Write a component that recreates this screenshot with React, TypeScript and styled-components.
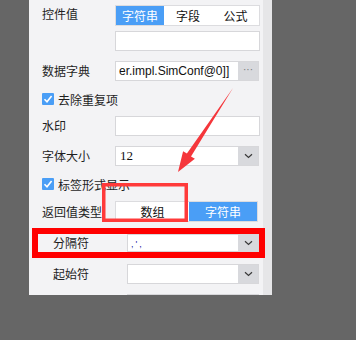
import React from "react";
import styled, { createGlobalStyle } from "styled-components";

const Global = createGlobalStyle`
  html, body { margin: 0; padding: 0; background: #666666; }
  body { font-family: "Noto Sans CJK SC", "Noto Sans", sans-serif; }
`;

const Page = styled.div`
  position: relative;
  width: 356px;
  height: 340px;
  padding-left: 29px;
  box-sizing: border-box;
  background: #666666;
`;

const Frame = styled.div`
  display: flex;
  width: 243px;
  height: 295px;
  overflow: hidden;
`;

const Content = styled.div`
  width: 234px;
  background: #f3f3f5;
  padding: 5px 3px 0 13px;
  box-sizing: border-box;
  display: flex;
  flex-direction: column;
`;

const Strip = styled.div`
  width: 9px;
  background: #e6e6e8;
`;

const Row = styled.div<{ $mt?: number; $h?: number; $top?: boolean }>`
  display: flex;
  align-items: ${(p) => (p.$top ? "flex-start" : "center")};
  margin-top: ${(p) => p.$mt ?? 0}px;
  height: ${(p) => p.$h ?? 20}px;
  flex-shrink: 0;
`;

const Label = styled.div<{ $w?: number }>`
  width: ${(p) => p.$w ?? 73}px;
  flex-shrink: 0;
  font-size: 12px;
  line-height: 16px;
  color: #1e1e1e;
`;

const Segmented = styled.div<{ $w: number }>`
  display: flex;
  width: ${(p) => p.$w}px;
  height: 21px;
  box-sizing: border-box;
  border: 1px solid #dcdcdf;
  background: #ffffff;
`;

const Segment = styled.div<{ $active?: boolean; $w?: number }>`
  ${(p) => (p.$w ? `width: ${p.$w}px; flex-shrink: 0;` : "flex: 1;")}
  display: flex;
  align-items: center;
  justify-content: center;
  font-size: 12px;
  color: ${(p) => (p.$active ? "#ffffff" : "#111111")};
  background: ${(p) => (p.$active ? "#4a9ef6" : "#ffffff")};
`;

const Input = styled.div<{ $w?: number; $ml?: number }>`
  display: flex;
  align-items: center;
  width: ${(p) => p.$w ?? 145}px;
  height: 20px;
  margin-left: ${(p) => p.$ml ?? 0}px;
  box-sizing: border-box;
  border: 1px solid #d7d7da;
  background: #ffffff;
  overflow: hidden;
  flex-shrink: 0;
`;

const InputText = styled.div<{ $serif?: boolean }>`
  flex: 1;
  padding-left: ${(p) => (p.$serif ? 4 : 3)}px;
  font-family: ${(p) => (p.$serif ? '"Liberation Serif", serif' : '"Liberation Sans", sans-serif')};
  font-size: ${(p) => (p.$serif ? 13 : 12)}px;
  color: #111;
  white-space: nowrap;
  overflow: hidden;
`;

const SideButton = styled.div`
  width: 20px;
  height: 100%;
  background: #d8d9dd;
  display: flex;
  align-items: center;
  justify-content: center;
  flex-shrink: 0;
`;

const Dots = styled.span`
  font-family: "Liberation Sans", sans-serif;
  font-size: 10px;
  letter-spacing: 0px;
  color: #777;
  line-height: 1;
  margin-top: -2px;
`;

const Check = styled.div`
  width: 12px;
  height: 12px;
  background: #4a9ef6;
  border-radius: 1px;
  display: flex;
  align-items: center;
  justify-content: center;
  margin-right: 4px;
`;

const CheckLabel = styled.span`
  font-size: 12px;
  color: #1e1e1e;
`;

const Highlight = styled.div`
  position: relative;
  display: flex;
  align-items: center;
  margin-top: 6px;
  margin-left: -10px;
  width: 233px;
  height: 30px;
  box-sizing: border-box;
  border: 6px solid #ff0000;
  padding-left: 15px;
  flex-shrink: 0;
`;

const Delim = styled.span`
  font-family: "Liberation Sans", sans-serif;
  font-size: 9px;
  color: #1a1aa0;
  letter-spacing: 2px;
`;

const Overlay = styled.svg`
  position: absolute;
  left: 0;
  top: 0;
  width: 356px;
  height: 340px;
  pointer-events: none;
`;

const Chevron = () => (
  <svg width="9" height="6" viewBox="0 0 9 6">
    <path d="M1 1.2 L4.5 4.5 L8 1.2" fill="none" stroke="#3a3a3a" strokeWidth="1.2" />
  </svg>
);

const Tick = () => (
  <svg width="10" height="10" viewBox="0 0 10 10">
    <path d="M1.5 5.2 L4 7.8 L8.6 2" fill="none" stroke="#ffffff" strokeWidth="1.6" />
  </svg>
);

export default function App() {
  return (
    <Page>
      <Global />
      <Frame>
        <Content>
          <Row $h={21} $top>
            <Label style={{ marginTop: 1 }}>控件值</Label>
            <Segmented $w={145}>
              <Segment $active $w={48}>字符串</Segment>
              <Segment $w={48}>字段</Segment>
              <Segment>公式</Segment>
            </Segmented>
          </Row>
          <Row $mt={5}>
            <Input $ml={73} />
          </Row>
          <Row $mt={10}>
            <Label>数据字典</Label>
            <Input $w={144}>
              <InputText>er.impl.SimConf@0]]</InputText>
              <SideButton>
                <Dots>···</Dots>
              </SideButton>
            </Input>
          </Row>
          <Row $mt={8}>
            <Check>
              <Tick />
            </Check>
            <CheckLabel>去除重复项</CheckLabel>
          </Row>
          <Row $mt={7}>
            <Label>水印</Label>
            <Input />
          </Row>
          <Row $mt={10}>
            <Label>字体大小</Label>
            <Input $w={144}>
              <InputText $serif>12</InputText>
              <SideButton>
                <Chevron />
              </SideButton>
            </Input>
          </Row>
          <Row $mt={8}>
            <Check>
              <Tick />
            </Check>
            <CheckLabel>标签形式显示</CheckLabel>
          </Row>
          <Row $mt={7} $h={21}>
            <Label>返回值类型</Label>
            <Segmented $w={143}>
              <Segment $w={73}>数组</Segment>
              <Segment $active>字符串</Segment>
            </Segmented>
          </Row>
          <Highlight>
            <Label $w={74}>分隔符</Label>
            <Input $w={132} style={{ height: 18 }}>
              <InputText>
                <Delim>,',</Delim>
              </InputText>
              <SideButton>
                <Chevron />
              </SideButton>
            </Input>
          </Highlight>
          <Row $mt={6}>
            <Label $w={74} style={{ marginLeft: 11 }}>起始符</Label>
            <Input $w={132}>
              <InputText />
              <SideButton>
                <Chevron />
              </SideButton>
            </Input>
          </Row>
          <Row $mt={10}>
            <Input $w={132} $ml={85}>
              <InputText />
              <SideButton>
                <Chevron />
              </SideButton>
            </Input>
          </Row>
        </Content>
        <Strip />
      </Frame>
      <Overlay viewBox="0 0 356 340">
        <rect x="103.75" y="184.75" width="82.5" height="35.5" fill="none" stroke="#ff3a3a" strokeWidth="3.5" />
        <polygon
          points="233,88 191,156.4 194.9,158.8 178,172 183.1,151.2 186.9,153.6"
          fill="#f5363b"
        />
      </Overlay>
    </Page>
  );
}
